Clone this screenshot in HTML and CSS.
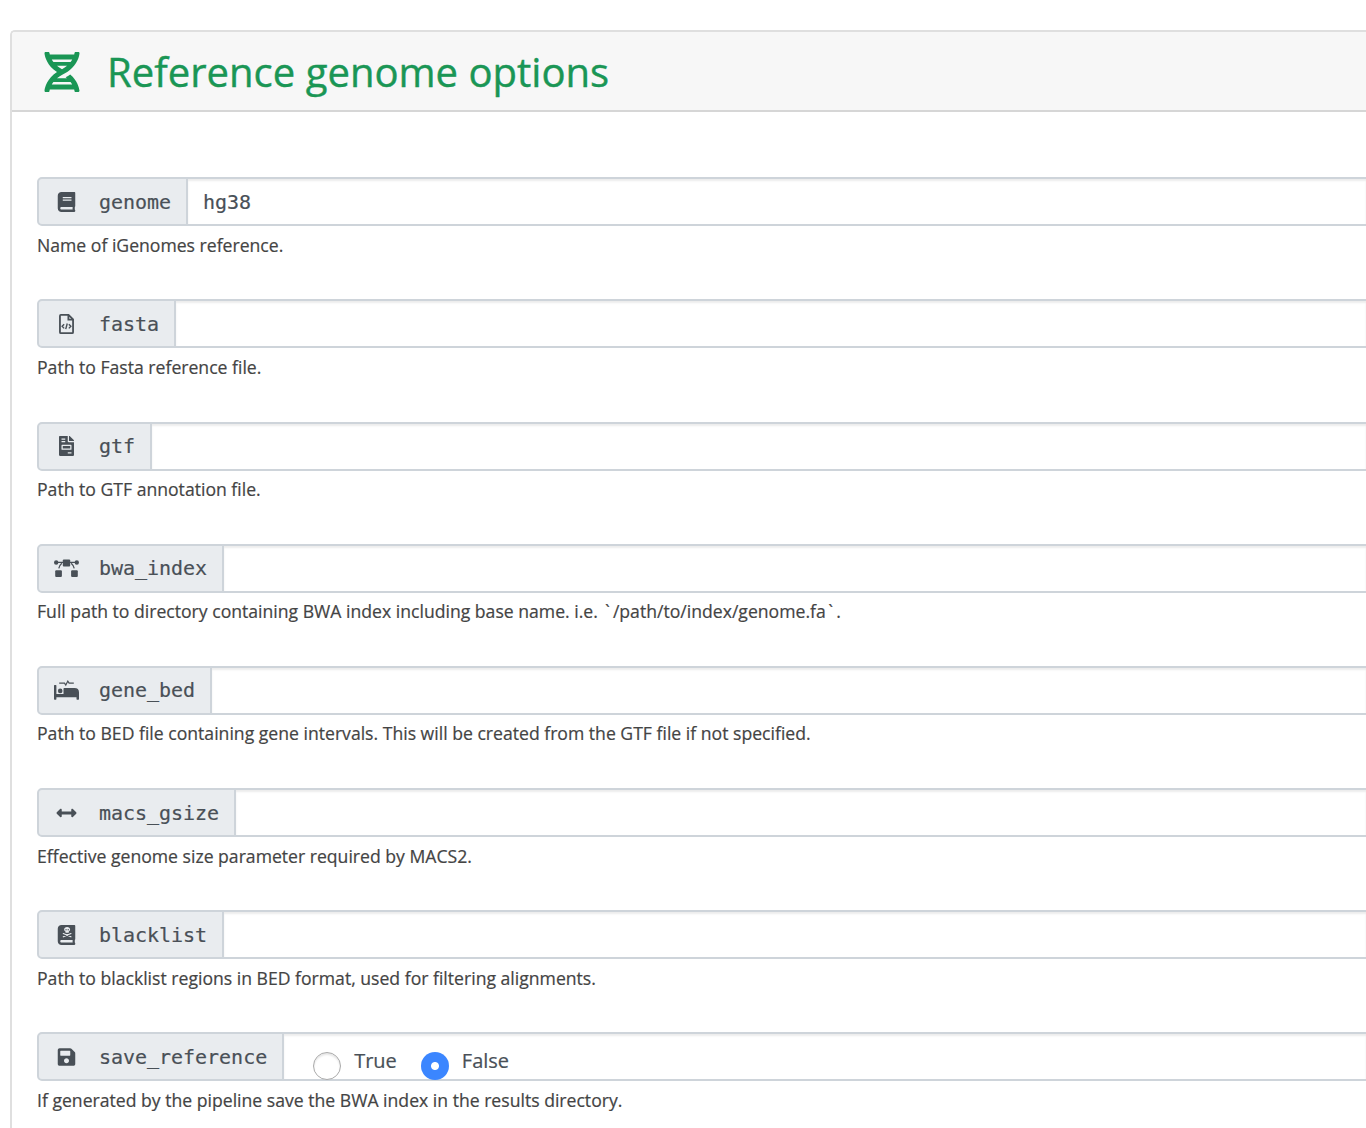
FILE: index.html
```
<!DOCTYPE html>
<html lang="en">
<head>
<meta charset="utf-8">
<title>Reference genome options</title>
<link rel="stylesheet" href="styles.css">
</head>
<body>
<section class="card">
  <header class="card-header">
    <svg class="title-icon" viewBox="0 0 448 512"><path d="M.1 494.1c-1.1 9.5 6.3 17.8 15.9 17.8l32.3.1c8.1 0 14.9-5.9 16-13.9.7-4.9 1.8-11.1 3.4-18.1H380c1.6 6.9 2.9 13.2 3.5 18.1 1.1 8 7.9 14 16 13.9l32.3-.1c9.6 0 17.1-8.3 15.9-17.8-4.6-37.9-25.6-129-118.9-207.7-17.6 12.4-37.1 24.2-58.5 35.4 6.2 4.6 11.4 9.4 17 14.2H159.7c21.3-18.1 47-35.6 78.7-51.4C410.5 199.1 442.1 65.8 447.9 17.9 449 8.4 441.6.1 432 .1L399.6 0c-8.1 0-14.9 5.9-16 13.9-.7 4.9-1.8 11.1-3.4 18.1H67.8c-1.6-7-2.7-13.1-3.4-18.1-1.1-8-7.9-14-16-13.9L16.1.1C6.5.1-1 8.4.1 17.9 5.3 60.8 31.4 171.8 160 256 31.5 340.2 5.3 451.2.1 494.1zM224 219.6c-25.1-13.7-46.4-28.4-64.3-43.6h128.5c-17.8 15.2-39.1 30-64.2 43.6zM355.1 96c-5.8 10.4-12.8 21.1-21 32H114c-8.3-10.9-15.3-21.6-21-32h262.1zM92.9 416c5.8-10.4 12.8-21.1 21-32h219.4c8.3 10.9 15.4 21.6 21.2 32H92.9z"/></svg>
    <h2 class="title">Reference genome options</h2>
  </header>
  <form class="card-body">
    <div class="param">
      <div class="group">
        <label class="name"><svg class="icon" viewBox="-96 0 640 512"><path d="M448 360V24c0-13.3-10.7-24-24-24H96C43 0 0 43 0 96v320c0 53 43 96 96 96h328c13.3 0 24-10.7 24-24v-16c0-7.5-3.5-14.3-8.9-18.7-4.2-15.4-4.2-59.3 0-74.7 5.4-4.3 8.9-11.1 8.9-18.6zM128 134c0-3.3 2.7-6 6-6h212c3.3 0 6 2.7 6 6v20c0 3.3-2.7 6-6 6H134c-3.3 0-6-2.7-6-6v-20zm0 64c0-3.3 2.7-6 6-6h212c3.3 0 6 2.7 6 6v20c0 3.3-2.7 6-6 6H134c-3.3 0-6-2.7-6-6v-20zm253.4 250H96c-17.7 0-32-14.3-32-32 0-17.6 14.4-32 32-32h285.4c-1.9 17.1-1.9 46.9 0 64z"/></svg>genome</label>
        <div class="field">hg38</div>
      </div>
      <p class="help">Name of iGenomes reference.</p>
    </div>
    <div class="param">
      <div class="group">
        <label class="name"><svg class="icon outline" viewBox="-128 0 640 512"><path d="M48 24h196l116 116v324q0 24-24 24H48q-24 0-24-24V48q0-24 24-24zM240 28v116h116"/><path class="thin" d="M132 264l-52 52 52 52M252 264l52 52-52 52M212 244l-40 144"/></svg>fasta</label>
        <div class="field"></div>
      </div>
      <p class="help">Path to Fasta reference file.</p>
    </div>
    <div class="param">
      <div class="group">
        <label class="name"><svg class="icon" viewBox="-128 0 640 512"><path d="M288 256H96v64h192v-64zm89-151L279.1 7c-4.5-4.5-10.6-7-17-7H256v128h128v-6.1c0-6.3-2.5-12.4-7-16.9zm-153 31V0H24C10.7 0 0 10.7 0 24v464c0 13.3 10.7 24 24 24h336c13.3 0 24-10.7 24-24V160H248c-13.2 0-24-10.8-24-24zM64 72c0-4.42 3.58-8 8-8h80c4.42 0 8 3.58 8 8v16c0 4.42-3.58 8-8 8H72c-4.42 0-8-3.58-8-8V72zm0 64c0-4.42 3.58-8 8-8h80c4.42 0 8 3.58 8 8v16c0 4.42-3.58 8-8 8H72c-4.42 0-8-3.58-8-8v-16zm256 304c0 4.42-3.58 8-8 8h-80c-4.42 0-8-3.58-8-8v-16c0-4.42 3.58-8 8-8h80c4.42 0 8 3.58 8 8v16zm0-200v96c0 8.84-7.16 16-16 16H80c-8.84 0-16-7.16-16-16v-96c0-8.84 7.16-16 16-16h224c8.84 0 16 7.16 16 16z"/></svg>gtf</label>
        <div class="field"></div>
      </div>
      <p class="help">Path to GTF annotation file.</p>
    </div>
    <div class="param">
      <div class="group">
        <label class="name"><svg class="icon" viewBox="0 0 25 20"><rect x="8.8" y="1.4" width="7.4" height="7" rx="1"/><rect x="1.2" y="12.200" width="6.700" height="6.800" rx="1"/><rect x="17.100" y="12.200" width="6.700" height="6.800" rx="1"/><circle cx="2.200" cy="4.500" r="2.200"/><circle cx="22.800" cy="4.500" r="2.200"/><path class="link" d="M2.500 4.300H9M22.500 4.300H16M7.800 5.200Q5.600 7 4.800 10.300M17.200 5.200Q19.400 7 20.200 10.300"/></svg>bwa_index</label>
        <div class="field"></div>
      </div>
      <p class="help">Full path to directory containing BWA index including base name. i.e. <span class="tick">`</span>/path/to/index/genome.fa<span class="tick">`</span>.</p>
    </div>
    <div class="param">
      <div class="group">
        <label class="name"><svg class="icon" viewBox="0 0 25 20"><path d="M.6 5h1.200q.6 0 .6.600v8.400h7.100V8.800q0-.8.800-.8h10.200q4.500 0 4.500 4.400v6.700q0 .6-.6.600h-1.300q-.6 0-.6-.6v-1.900H2.400v1.900q0 .6-.6.600H.6q-.6 0-.6-.6v-13.500q0-.6.6-.6z"/><circle cx="6.200" cy="10.900" r="2.300"/><path class="pulse" d="M5.200 3.100h5.300l1.300 2 2-4 1.300 2h4.700"/></svg>gene_bed</label>
        <div class="field"></div>
      </div>
      <p class="help">Path to BED file containing gene intervals. This will be created from the GTF file if not specified.</p>
    </div>
    <div class="param">
      <div class="group">
        <label class="name"><svg class="icon" viewBox="-64 0 640 512"><path d="M377.941 169.941V216H134.059v-46.059c0-21.382-25.851-32.09-40.971-16.971L7.029 239.029c-9.373 9.373-9.373 24.568 0 33.941l86.059 86.059c15.119 15.119 40.971 4.411 40.971-16.971V296h243.882v46.059c0 21.382 25.851 32.09 40.971 16.971l86.059-86.059c9.373-9.373 9.373-24.568 0-33.941l-86.059-86.059c-15.119-15.12-40.971-4.412-40.971 16.97z"/></svg>macs_gsize</label>
        <div class="field"></div>
      </div>
      <p class="help">Effective genome size parameter required by MACS2.</p>
    </div>
    <div class="param">
      <div class="group">
        <label class="name"><svg class="icon" viewBox="-96 0 640 512"><path d="M448 360V24c0-13.3-10.7-24-24-24H96C43 0 0 43 0 96v320c0 53 43 96 96 96h328c13.3 0 24-10.7 24-24v-16c0-7.5-3.5-14.3-8.9-18.7-4.2-15.4-4.2-59.3 0-74.7 5.4-4.3 8.9-11.1 8.9-18.6zM381.4 448H96c-17.7 0-32-14.3-32-32 0-17.6 14.4-32 32-32h285.4c-1.9 17.1-1.9 46.9 0 64z"/><path class="cut" d="M240 54c-44 0-76 27-76 62 0 22 12 40 32 51v19q0 10 10 10h68q10 0 10-10v-19c20-11 32-29 32-51 0-35-32-62-76-62z"/><circle cx="212" cy="122" r="17"/><circle cx="268" cy="122" r="17"/><path class="bones" d="M142 218l196 84M338 218l-196 84"/></svg>blacklist</label>
        <div class="field"></div>
      </div>
      <p class="help">Path to blacklist regions in BED format, used for filtering alignments.</p>
    </div>
    <div class="param">
      <div class="group">
        <label class="name"><svg class="icon" viewBox="-96 0 640 512"><path d="M433.941 129.941l-83.882-83.882A48 48 0 0 0 316.118 32H48C21.49 32 0 53.49 0 80v352c0 26.51 21.49 48 48 48h352c26.51 0 48-21.49 48-48V163.882a48 48 0 0 0-14.059-33.941zM224 416c-35.346 0-64-28.654-64-64 0-35.346 28.654-64 64-64s64 28.654 64 64c0 35.346-28.654 64-64 64zm96-304.52V212c0 6.627-5.373 12-12 12H76c-6.627 0-12-5.373-12-12V108c0-6.627 5.373-12 12-12h228.52c3.183 0 6.235 1.264 8.485 3.515l3.48 3.48A11.996 11.996 0 0 1 320 111.48z"/></svg>save_reference</label>
        <div class="field choices">
          <label class="choice"><span class="radio"></span><span class="choice-text">True</span></label>
          <label class="choice"><span class="radio checked"></span><span class="choice-text">False</span></label>
        </div>
      </div>
      <p class="help">If generated by the pipeline save the BWA index in the results directory.</p>
    </div>
  </form>
</section>
</body>
</html>
```
FILE: styles.css
```
* { box-sizing: border-box; }
body {
  margin: 0;
  padding: 30px 0 0 10px;
  height: 1128px;
  overflow: hidden;
  background: #fff;
  font-family: "Open Sans", sans-serif;
  -webkit-text-stroke: .2px;
}
.card {
  height: 1098px;
  overflow: hidden;
  border: 2px solid #dfdfdf;
  border-width: 2px 0 0 2px;
  border-radius: 5px 0 0 0;
  background: #fff;
}
.card-header {
  display: flex;
  align-items: center;
  height: 80px;
  padding-left: 32px;
  border-bottom: 2px solid #d6d6d6;
  background: #f7f7f7;
  color: #1a9655;
}
.title-icon {
  width: 36px;
  height: 40px;
  margin: 1px 27px 0 0;
  fill: currentColor;
}
.title {
  margin: 2px 0 0;
  font-size: 40.05px;
  font-weight: 400;
  line-height: 48px;
  -webkit-text-stroke: .4px;
}
.card-body { padding: 65.3px 0 0 25px; }
.param { height: 122.15px; }
.param:last-child { height: auto; }
.group { display: flex; height: 49px; }
.name {
  display: flex;
  align-items: center;
  padding: 0 15px;
  border: 2px solid #ced4da;
  border-radius: 5px 0 0 5px;
  background: #e9ecef;
  color: #495057;
  font: 20px/30px "DejaVu Sans Mono", monospace;
  letter-spacing: -0.03px;
}
.icon {
  width: 25px;
  height: 20px;
  margin-right: 20px;
  fill: currentColor;
  overflow: visible;
}
.outline { fill: none; stroke: currentColor; stroke-width: 46; }
.outline .thin { stroke-width: 36; }
.link { fill: none; stroke: currentColor; stroke-width: 1.3; }
.pulse { fill: none; stroke: currentColor; stroke-width: 1.2; }
.cut { fill: #e9ecef; }
.bones { stroke: #e9ecef; stroke-width: 30; stroke-linecap: round; }
.field {
  flex: 1;
  display: flex;
  align-items: center;
  padding-left: 15px;
  border: solid #ced4da;
  border-width: 2px 0;
  box-shadow: inset 0 2px 2px rgba(0, 0, 0, .075);
  color: #495057;
  font: 20px/30px "DejaVu Sans Mono", monospace;
  letter-spacing: -0.03px;
}
.choices {
  align-items: flex-start;
  gap: 24px;
  padding: 17.7px 0 0 29px;
  font-family: "Open Sans", sans-serif;
  letter-spacing: 0;
}
.choice { display: flex; height: 28px; }
.radio {
  width: 28px;
  height: 28px;
  margin-right: 13px;
  border: 1px solid #aaa;
  border-radius: 50%;
  background: #fff;
  box-shadow: inset 0 2px 2px rgba(0, 0, 0, .1);
}
.checked {
  border: 0;
  background: radial-gradient(circle, #fff 3.5px, #3b86ff 4.5px);
  box-shadow: none;
}
.choice-text { margin-top: -5px; line-height: 28px; }
.help {
  margin: 6.6px 0 0;
  color: #444;
  font-size: 17.62px;
  line-height: 24px;
  white-space: nowrap;
}
.tick { padding: 0 3px 0 2.6px; }
```
